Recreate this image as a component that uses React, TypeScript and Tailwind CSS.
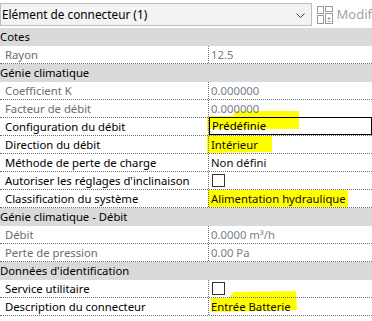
import React from "react";

type Row =
  | { kind: "header"; label: string }
  | { kind: "prop"; label: string; value?: string; disabled?: boolean; checkbox?: boolean; edit?: boolean };

const rows: Row[] = [
  { kind: "header", label: "Cotes" },
  { kind: "prop", label: "Rayon", value: "12.5", disabled: true },
  { kind: "header", label: "Génie climatique" },
  { kind: "prop", label: "Coefficient K", value: "0.000000", disabled: true },
  { kind: "prop", label: "Facteur de débit", value: "0.000000", disabled: true },
  { kind: "prop", label: "Configuration du débit", value: "Prédéfinie", edit: true },
  { kind: "prop", label: "Direction du débit", value: "Intérieur" },
  { kind: "prop", label: "Méthode de perte de charge", value: "Non défini" },
  { kind: "prop", label: "Autoriser les réglages d'inclinaison", checkbox: true },
  { kind: "prop", label: "Classification du système", value: "Alimentation hydraulique" },
  { kind: "header", label: "Génie climatique - Débit" },
  { kind: "prop", label: "Débit", value: "0.0000 m³/h", disabled: true },
  { kind: "prop", label: "Perte de pression", value: "0.00 Pa", disabled: true },
  { kind: "header", label: "Données d'identification" },
  { kind: "prop", label: "Service utilitaire", checkbox: true },
  { kind: "prop", label: "Description du connecteur", value: "Entrée Batterie" },
];

export default function App() {
  return (
    <div
      className="relative isolate w-[372px] h-[321px] overflow-hidden bg-white text-[11.3px] text-black"
      style={{ fontFamily: '"Noto Sans", "Open Sans", sans-serif' }}
    >
      {/* marker highlights */}
      <svg className="absolute left-0 top-0 -z-10 pointer-events-none" width="372" height="321">
        <path d="M207,116 L232,116 L236,111 L299,111 L299,129 L209,129 L209,131 L207,131 Z" fill="#ffff00" />
        <path d="M207,134 L218,134 L219,136 L272,136 L272,152 L207,153 Z" fill="#ffff00" />
        <path d="M208,190 L348,190 L348,207 L208,207 Z" fill="#ffff00" />
        <path d="M211,298 L228,298 L234,292 L296,291 L297,310 L211,312 Z" fill="#ffff00" />
      </svg>

      {/* top bar */}
      <div className="flex items-center h-[28px] pt-[3px] pb-[2px]">
        <div className="flex items-center w-[313px] h-[23px] border border-[#bdbdbd] bg-[#f3f3f3] pl-px pr-[6px]">
          <span className="flex-1 leading-none text-[11.8px]">Elément de connecteur (1)</span>
          <svg width="9" height="6" viewBox="0 0 9 6" className="mt-[2px]">
            <path d="M0.5,0.5 L4.5,4.5 L8.5,0.5" fill="none" stroke="#444" strokeWidth="1" />
          </svg>
        </div>
        <div className="flex items-center pl-[5px] gap-[4px] text-[#a3a3a3] h-[23px]">
          <svg width="16" height="18" viewBox="0 0 16 18">
            <rect x="0.5" y="0.5" width="6" height="7" fill="none" stroke="#9a9a9a" />
            <rect x="0.5" y="9.5" width="6" height="8" fill="none" stroke="#9a9a9a" />
            <rect x="8.5" y="0.5" width="7" height="5" fill="none" stroke="#9a9a9a" />
            <rect x="8.5" y="7.5" width="7" height="10" fill="none" stroke="#9a9a9a" />
            <path d="M10.5,12.5 H13.5 M12,11 V14 M10.5,15.5 H13.5" stroke="#9a9a9a" strokeWidth="1" />
          </svg>
          <span className="leading-none text-[13px]">Modif</span>
        </div>
      </div>

      {/* property rows */}
      <div className="flex flex-col">
        {rows.map((r, i) =>
          r.kind === "header" ? (
            <div key={i} className="h-[18px] bg-[#dadada] flex items-center leading-none">
              <span>{r.label}</span>
            </div>
          ) : (
            <div key={i} className="h-[18px] flex border-b border-dotted border-[#6e6e6e]">
              <div
                className={`w-[209px] shrink-0 border-r border-dotted border-[#6e6e6e] pl-[5px] flex items-center leading-none ${
                  r.disabled ? "text-[#6d6d6d]" : "text-black"
                }`}
              >
                {r.label}
              </div>
              <div className="flex-1 flex items-center leading-none">
                {r.edit ? (
                  <div className="relative -top-px h-[18px] w-full border border-black flex items-center pl-[2px]">
                    {r.value}
                  </div>
                ) : r.checkbox ? (
                  <div className="ml-[3px] w-[13px] h-[13px] border border-[#333333]" />
                ) : (
                  <span className={`pl-[2px] ${r.disabled ? "text-[#76808c]" : "text-[#140808]"}`}>{r.value}</span>
                )}
              </div>
            </div>
          )
        )}
      </div>
    </div>
  );
}
